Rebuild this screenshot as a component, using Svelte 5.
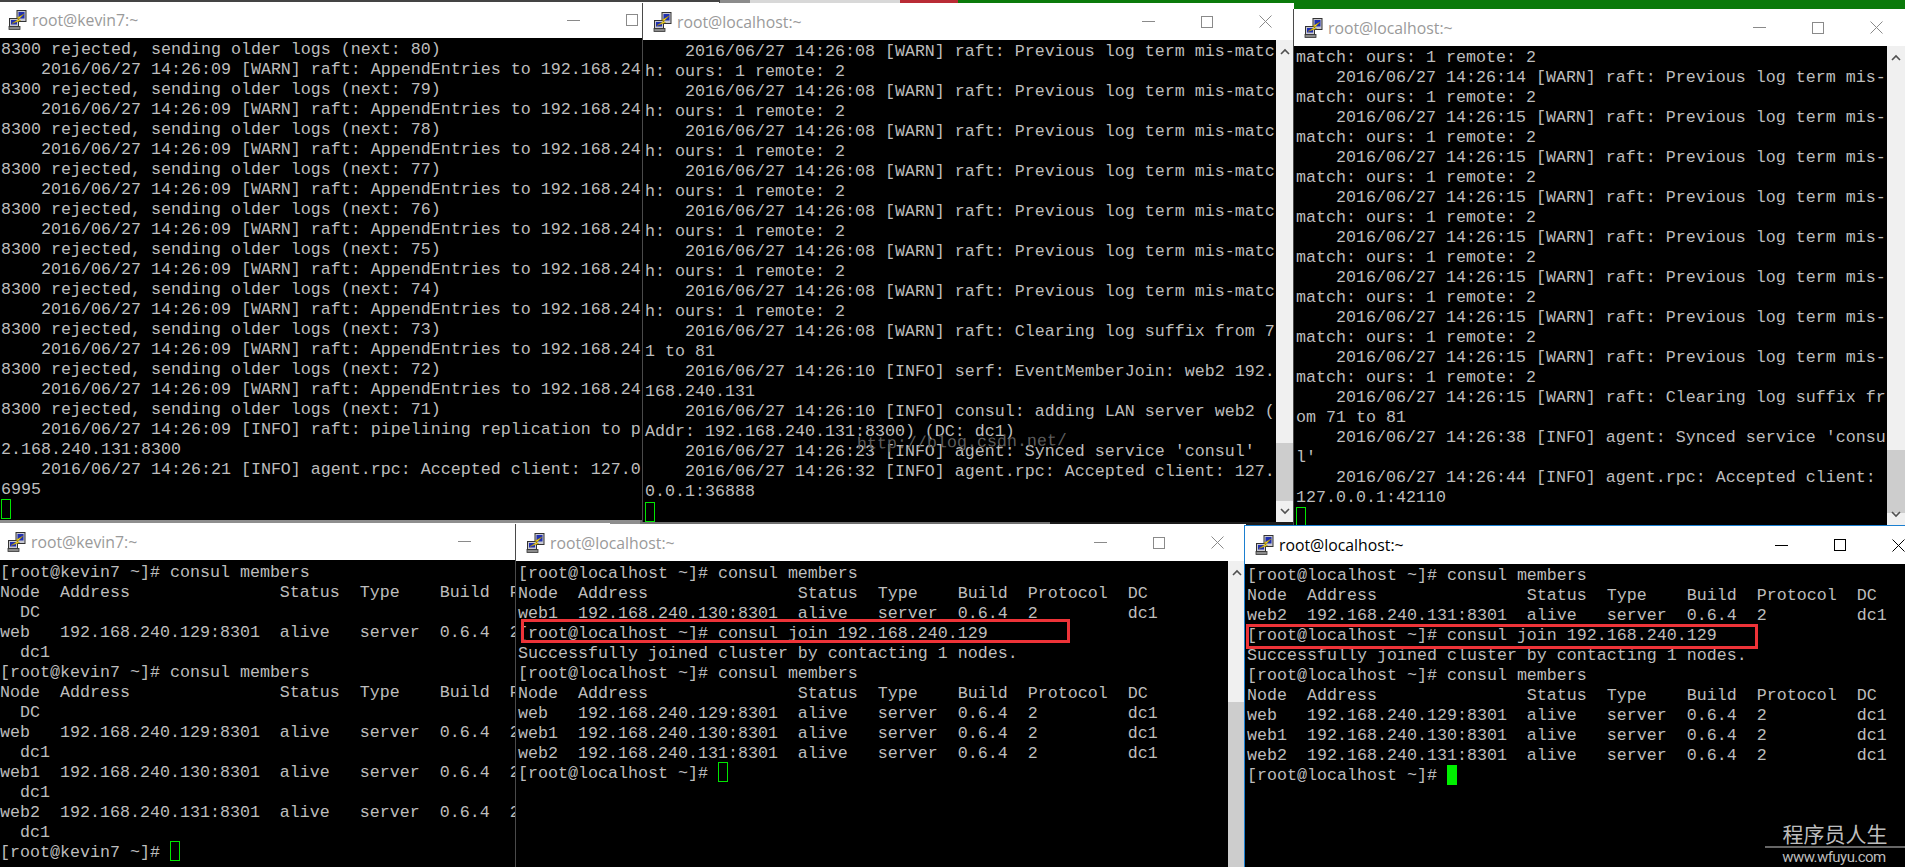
<script>
  const pad = "    ";
  const stamp = (t, lvl) => `${pad}2016/06/27 14:26:${t} [${lvl}] `;

  // window 1: AppendEntries backlog
  const win1 = ["8300 rejected, sending older logs (next: 80)"];
  for (let n = 79; n >= 71; n--) {
    win1.push(stamp("09", "WARN") + "raft: AppendEntries to 192.168.24");
    win1.push(`8300 rejected, sending older logs (next: ${n})`);
  }
  win1.push(
    stamp("09", "INFO") + "raft: pipelining replication to p",
    "2.168.240.131:8300",
    stamp("21", "INFO") + "agent.rpc: Accepted client: 127.0",
    "6995"
  );

  // window 2
  const win2 = [];
  for (let i = 0; i < 7; i++) {
    win2.push(stamp("08", "WARN") + "raft: Previous log term mis-matc");
    win2.push("h: ours: 1 remote: 2");
  }
  win2.push(
    stamp("08", "WARN") + "raft: Clearing log suffix from 7",
    "1 to 81",
    stamp("10", "INFO") + "serf: EventMemberJoin: web2 192.",
    "168.240.131",
    stamp("10", "INFO") + "consul: adding LAN server web2 (",
    "Addr: 192.168.240.131:8300) (DC: dc1)",
    stamp("23", "INFO") + "agent: Synced service 'consul'",
    stamp("32", "INFO") + "agent.rpc: Accepted client: 127.",
    "0.0.1:36888"
  );

  // window 3
  const win3 = ["match: ours: 1 remote: 2"];
  ["14", "15", "15", "15", "15", "15", "15", "15"].forEach((t) => {
    win3.push(stamp(t, "WARN") + "raft: Previous log term mis-");
    win3.push("match: ours: 1 remote: 2");
  });
  win3.push(
    stamp("15", "WARN") + "raft: Clearing log suffix fr",
    "om 71 to 81",
    stamp("38", "INFO") + "agent: Synced service 'consu",
    "l'",
    stamp("44", "INFO") + "agent.rpc: Accepted client: ",
    "127.0.0.1:42110"
  );

  const head = "Node  Address               Status  Type    Build  Protocol  DC";
  const node = (name, ip) =>
    `${name.padEnd(6)}192.168.240.${ip}:8301  alive   server  0.6.4  2         dc1`;

  // window 4 is narrow, so DC and dc1 wrap onto their own line
  const wrapped = (row) => [row.slice(0, 52), "  " + row.slice(61)];
  const kevin = "[root@kevin7 ~]# ";
  const win4 = [
    kevin + "consul members",
    ...wrapped(head),
    ...wrapped(node("web", 129)),
    kevin + "consul members",
    ...wrapped(head),
    ...wrapped(node("web", 129)),
    ...wrapped(node("web1", 130)),
    ...wrapped(node("web2", 131))
  ];

  const local = "[root@localhost ~]# ";
  const joinLog = (name, ip) => [
    local + "consul members",
    head,
    node(name, ip),
    local + "consul join 192.168.240.129",
    "Successfully joined cluster by contacting 1 nodes.",
    local + "consul members",
    head,
    node("web", 129),
    node("web1", 130),
    node("web2", 131)
  ];

  // lh is the text's line-height: it sinks the glyphs a little in their 20px row without moving the cursor
  const windows = [
    { id: "a", title: "root@kevin7:~", x: 0, y: 2, w: 719, h: 518, bar: 36, top: 1, left: 1, lh: 22, inset: 8, lines: win1, prompt: "" },
    { id: "b", title: "root@localhost:~", x: 642, y: 3, w: 652, h: 519, bar: 37, top: 2, left: 2, lh: 20, inset: 10, lines: win2, prompt: "", thumb: [403, 58], edge: true },
    { id: "c", title: "root@localhost:~", x: 1293, y: 9, w: 612, h: 516, bar: 37, top: 1, left: 2, lh: 22, inset: 10, lines: win3, prompt: "", thumb: [404, 63], edge: true },
    { id: "d", title: "root@kevin7:~", x: 0, y: 523, w: 610, h: 364, bar: 37, top: 1, left: 0, lh: 24, inset: 7, lines: win4, prompt: kevin },
    { id: "e", title: "root@localhost:~", x: 515, y: 524, w: 731, h: 363, bar: 37, top: 1, left: 2, lh: 24, inset: 10, lines: joinLog("web1", 130), prompt: local, thumb: [141, 200], edge: true, box: [5, 95, 549, 24] },
    { id: "f", title: "root@localhost:~", x: 1244, y: 525, w: 684, h: 362, bar: 38, top: 1, left: 2, lh: 22, inset: 10, lines: joinLog("web2", 131), prompt: local, active: true, box: [1, 98, 512, 25] }
  ];
</script>

{#snippet putty()}
  <svg class="icon" width="20" height="20" viewBox="0 0 20 20">
    <rect x="9" y="0.5" width="9" height="11" fill="#c8c8d0" stroke="#333" />
    <rect x="10.5" y="2" width="6" height="6.5" fill="#2030b0" />
    <rect x="1.5" y="8.5" width="9" height="8" fill="#c8c8d0" stroke="#333" />
    <rect x="3" y="10" width="6" height="4.5" fill="#2030b0" />
    <rect x="1" y="16.5" width="11" height="3" fill="#8a8a8a" stroke="#333" stroke-width="0.8" />
    <path d="M16 4 L9 8 L11 9 L4 13.5 L12.5 10.5 L10.5 9.5 Z" fill="#f8e020" stroke="#a08000" stroke-width="0.5" />
  </svg>
{/snippet}

{#snippet chevron(up)}
  <svg width="10" height="7" viewBox="0 0 10 7">
    <path d={up ? "M1 6 L5 2 L9 6" : "M1 1 L5 5 L9 1"} fill="none" stroke="#505050" stroke-width="1.6" />
  </svg>
{/snippet}

<div class="desktop">
  <div class="toprow">
    <span class="seg dark"></span>
    <span class="seg mid"></span>
    <span class="seg light"></span>
    <span class="seg red"></span>
    <span class="seg green"></span>
  </div>

  <div class="band">
    <span class="seg b1"></span>
    <span class="seg b2"></span>
    <span class="seg b3"></span>
  </div>

  {#each windows as win}
    <section
      class="window"
      class:edge={win.edge}
      class:active={win.active}
      style="left:{win.x}px;top:{win.y}px;width:{win.w}px;height:{win.h}px"
    >
      <header class="titlebar" style="height:{win.bar}px;padding-left:{win.inset}px">
        {@render putty()}
        <span class="title">{win.title}</span>
        <div class="controls">
          <span class="ctl"><svg width="13" height="13" viewBox="0 0 13 13"><path d="M0 6.5H13" stroke="currentColor" /></svg></span>
          <span class="ctl"><svg width="12" height="12" viewBox="0 0 12 12"><rect x="0.5" y="0.5" width="11" height="11" fill="none" stroke="currentColor" /></svg></span>
          <span class="ctl"><svg width="13" height="13" viewBox="0 0 13 13"><path d="M0.5 0.5L12.5 12.5M12.5 0.5L0.5 12.5" stroke="currentColor" /></svg></span>
        </div>
      </header>

      <div class="body">
        <div class="screen" style="padding:{win.top}px 0 0 {win.left}px;line-height:{win.lh}px">
          {#each win.lines as line}
            <div class="line">{line}</div>
          {/each}
          <div class="line">{win.prompt}<span class="cursor"></span></div>
        </div>
        {#if win.thumb}
          <div class="scrollbar">
            <span class="arrow up">{@render chevron(true)}</span>
            <span class="thumb" style="top:{win.thumb[0]}px;height:{win.thumb[1]}px"></span>
            <span class="arrow down">{@render chevron(false)}</span>
          </div>
        {/if}
      </div>

      {#if win.box}
        <div class="redbox" style="left:{win.box[0]}px;top:{win.box[1]}px;width:{win.box[2]}px;height:{win.box[3]}px"></div>
      {/if}

      {#if win.id === "b"}
        <div class="csdn">http://blog.csdn.net/</div>
      {/if}
    </section>
  {/each}

  <div class="mark">
    <div class="mark-cn">程序员人生</div>
    <div class="mark-url">www.wfuyu.com</div>
  </div>
</div>

<style>
  :global(body) {
    margin: 0;
    background: #000;
    overflow: hidden;
  }
  .desktop {
    position: relative;
    width: 1905px;
    height: 867px;
    overflow: hidden;
    background: #8a8a8a;
  }
  .toprow {
    display: flex;
    height: 10px;
  }
  .band {
    position: absolute;
    left: 0;
    right: 0;
    top: 520px;
    height: 6px;
    display: flex;
  }
  .seg {
    display: block;
  }
  .dark { width: 720px; background: #444; }
  .mid { width: 30px; background: #8c8c8c; }
  .light { width: 150px; background: #d8d8d8; }
  .red { width: 58px; background: #b92b35; }
  .green { flex: 1; background: #0a7a0a; }
  .b1 { width: 640px; background: #8e8e8e; }
  .b2 { width: 410px; background: #6f6f6f; }
  .b3 { flex: 1; background: #1c1c1c; }

  .window {
    position: absolute;
    box-sizing: border-box;
    display: flex;
    flex-direction: column;
    background: #000;
    font-family: "Liberation Mono", monospace;
  }
  .window.edge {
    border-left: 1px solid #4a4a4a;
  }
  .window.active {
    border: 1px solid #1b7fd0;
    border-bottom: 0;
  }
  .titlebar {
    flex: none;
    box-sizing: border-box;
    display: flex;
    align-items: center;
    background: #fff;
    color: #9a9a9a;
    font-family: "Open Sans", sans-serif;
    font-size: 15.8px;
  }
  .active .titlebar {
    color: #000;
  }
  .icon {
    flex: none;
    margin-right: 4px;
  }
  .title {
    flex: 1;
    white-space: nowrap;
  }
  .controls {
    display: flex;
    flex: none;
    margin-right: -1px;
    color: #8a8a8a;
  }
  .active .controls {
    color: #000;
  }
  .ctl {
    display: flex;
    width: 58.5px;
    height: 26px;
    align-items: center;
    justify-content: center;
  }
  .body {
    flex: 1;
    min-height: 0;
    display: flex;
    background: #000;
  }
  .screen {
    flex: 1;
    min-width: 0;
    overflow: hidden;
    color: #bdbdbd;
    font-size: 16.667px;
  }
  .line {
    height: 20px;
    white-space: pre;
  }
  .cursor {
    display: inline-block;
    box-sizing: border-box;
    width: 10px;
    height: 20px;
    vertical-align: top;
    border: 1px solid #00e600;
  }
  .active .cursor {
    background: #00f000;
    border-color: #00f000;
  }
  .scrollbar {
    position: relative;
    flex: none;
    width: 18px;
    background: #f0f0f0;
  }
  .arrow {
    position: absolute;
    left: 4px;
    display: flex;
  }
  .arrow.up { top: 8px; }
  .arrow.down { bottom: 7px; }
  .thumb {
    position: absolute;
    left: 0;
    right: 0;
    background: #cdcdcd;
  }
  .redbox {
    position: absolute;
    box-sizing: border-box;
    border: 3px solid #ee3338;
  }
  .csdn {
    position: absolute;
    left: 214px;
    top: 430px;
    color: #5c5c5c;
    font-size: 16.667px;
    line-height: 20px;
    white-space: pre;
    transform: rotate(-1deg);
  }
  .mark {
    position: absolute;
    left: 1765px;
    top: 820px;
    width: 140px;
    color: #bdbdbd;
    text-align: center;
  }
  .mark-cn {
    font-family: "Noto Sans CJK SC", sans-serif;
    font-size: 21px;
    line-height: 26px;
    border-bottom: 2px solid #666;
    box-sizing: border-box;
  }
  .mark-url {
    font-family: Roboto, sans-serif;
    font-size: 15px;
    letter-spacing: -0.55px;
    line-height: 19px;
    padding-right: 2px;
  }
</style>
